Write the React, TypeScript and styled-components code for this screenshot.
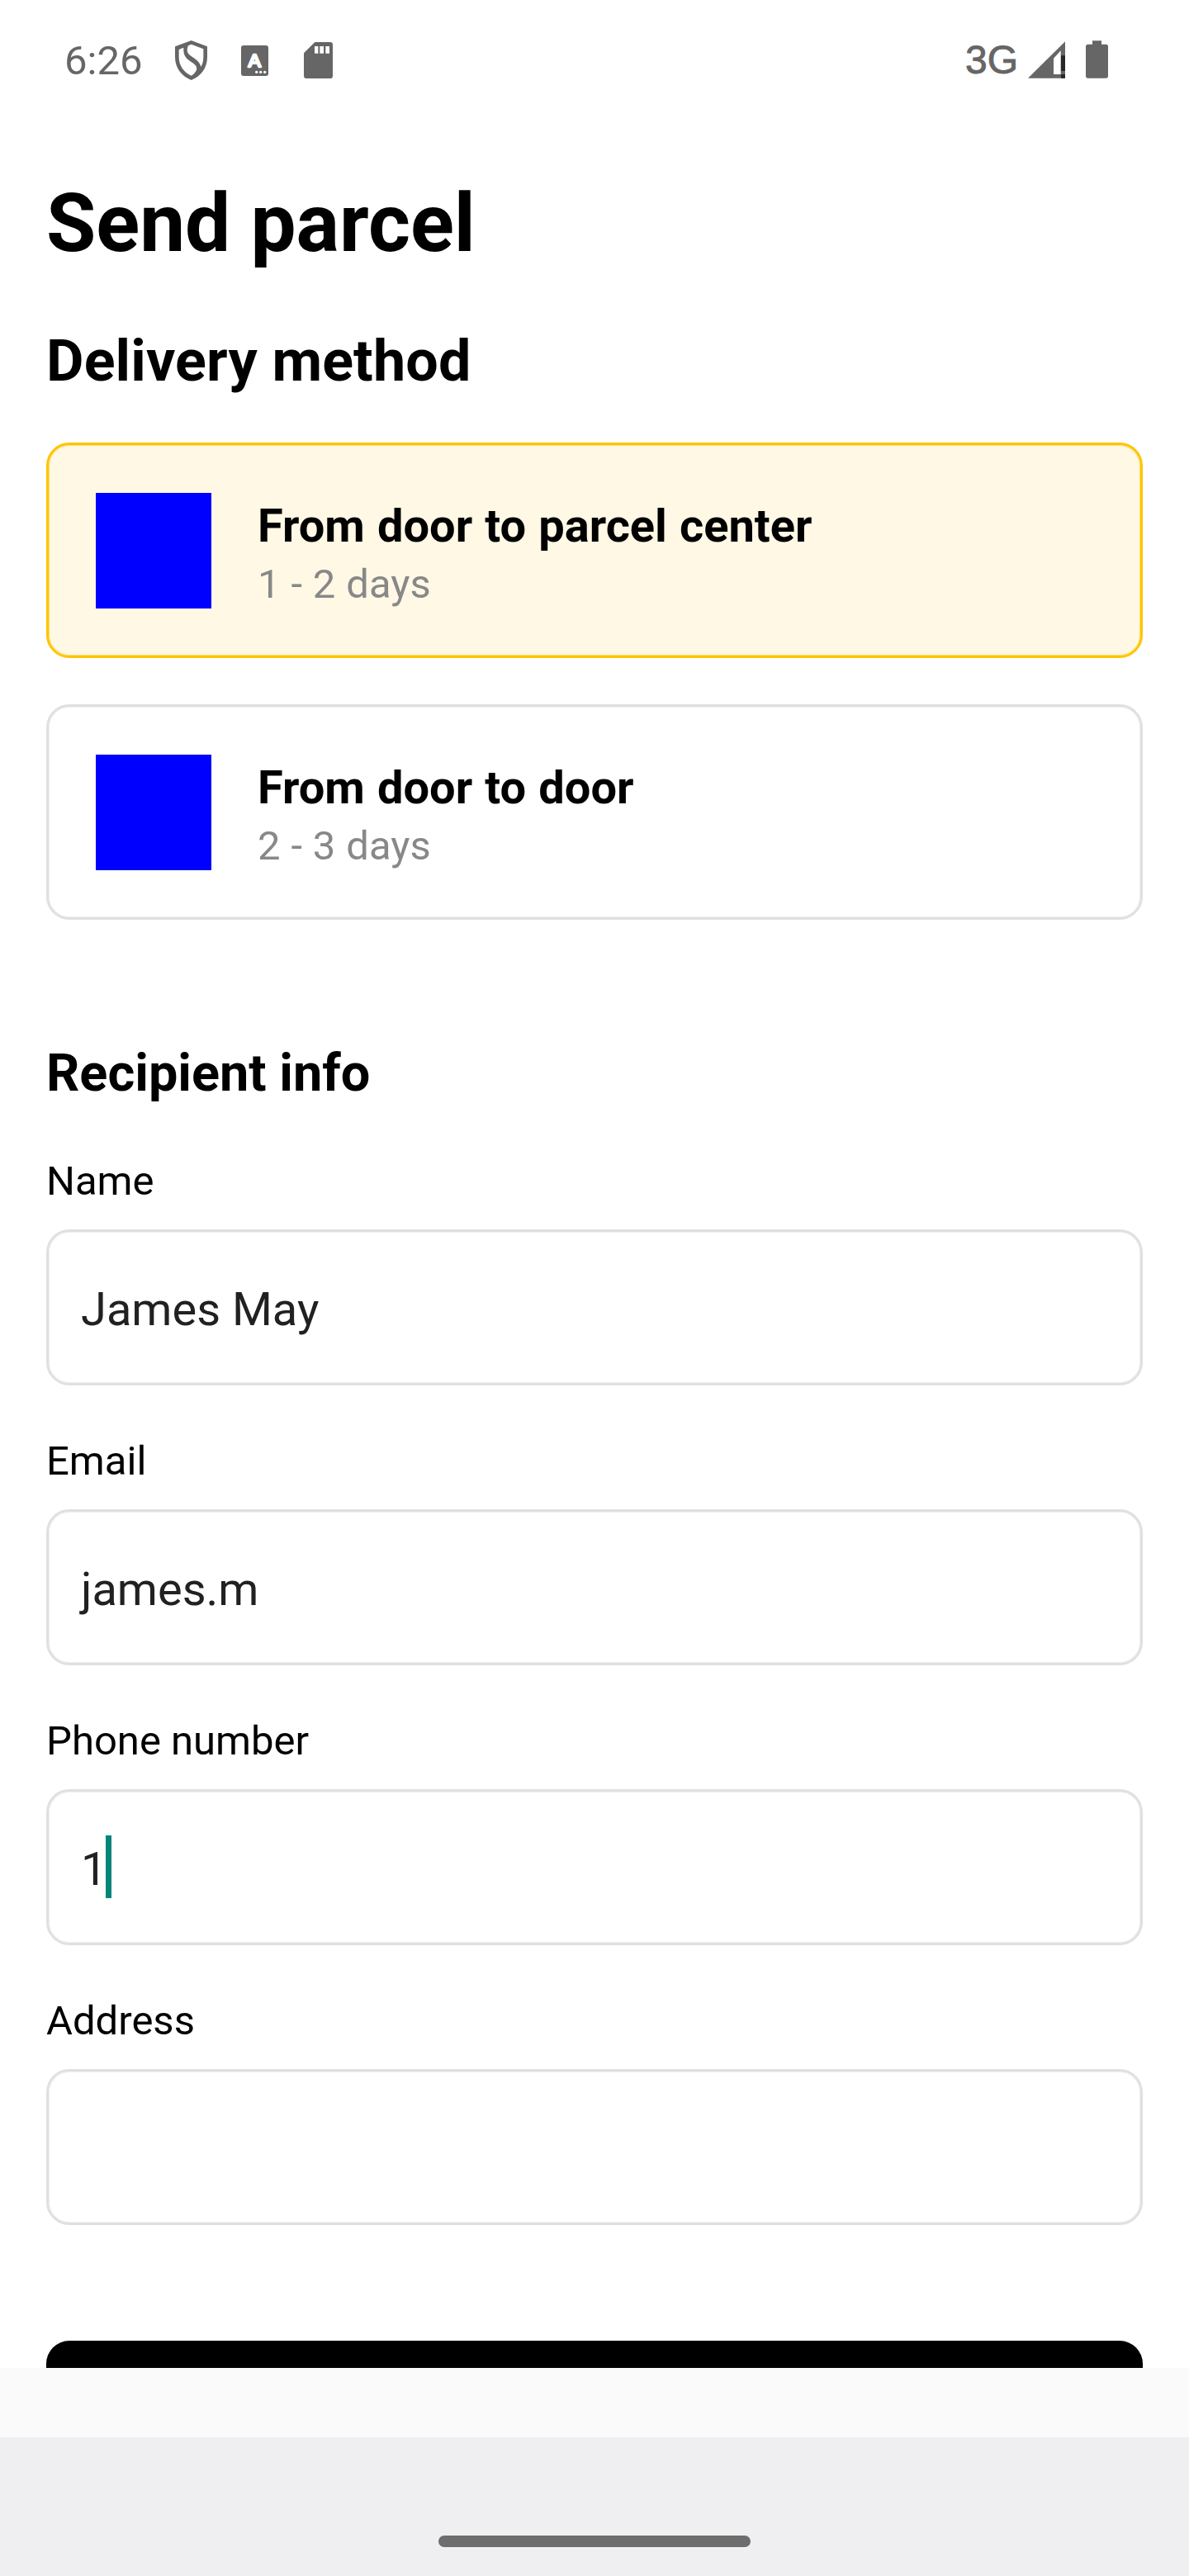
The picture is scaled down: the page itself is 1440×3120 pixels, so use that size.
import React from 'react';
import styled, { createGlobalStyle } from 'styled-components';

const GlobalStyle = createGlobalStyle`
  *, *::before, *::after { box-sizing: border-box; }
  body { margin: 0; background: #fff; }
`;

const Screen = styled.div`
  display: flex;
  flex-direction: column;
  width: 1440px;
  height: 3120px;
  overflow: hidden;
  background: #fff;
  color: #000;
  font-family: Roboto, 'Liberation Sans', sans-serif;
`;

const StatusBar = styled.header`
  display: flex;
  justify-content: space-between;
  flex: none;
  height: 145px;
  padding: 45px 98px 0 78px;
  color: #666;
`;

const StatusGroup = styled.div`
  display: flex;
  align-items: flex-start;
`;

const Clock = styled.span`
  width: 95px;
  font-size: 49px;
  line-height: 57px;
`;

const Network = styled.span`
  font-family: 'Liberation Sans', Arial, sans-serif;
  font-size: 48px;
  line-height: 56px;
  -webkit-text-stroke: 0.9px currentColor;
`;

const StatusIcon = styled.svg<{ $left: number; $top: number }>`
  flex: none;
  display: block;
  margin-left: ${(p) => p.$left}px;
  margin-top: ${(p) => p.$top}px;
`;

const IconLetter = styled.text`
  font-family: 'Liberation Sans', Arial, sans-serif;
  font-weight: 400;
  font-size: 68px;
`;

const Content = styled.main`
  flex: none;
  height: 2723px;
  padding: 68px 56px 0;
  overflow: hidden;
`;

const Title = styled.h1`
  margin: 0 0 68px;
  font-size: 98px;
  line-height: 115px;
  font-weight: 700;
  letter-spacing: -0.05px;
`;

const SectionTitle = styled.h2<{ $size: number; $line: number; $gap: number; $tracking?: number }>`
  margin: 0 0 ${(p) => p.$gap}px;
  font-size: ${(p) => p.$size}px;
  line-height: ${(p) => p.$line}px;
  font-weight: 700;
  letter-spacing: ${(p) => p.$tracking ?? 0}px;
`;

const MethodList = styled.div`
  display: flex;
  flex-direction: column;
  gap: 56px;
  margin-bottom: 149px;
`;

const MethodCard = styled.div<{ $selected?: boolean }>`
  display: flex;
  gap: 56px;
  height: 261px;
  padding: 58px 57px;
  border: 3px solid ${(p) => (p.$selected ? '#ffc400' : '#e0e0e0')};
  border-radius: 28px;
  background: ${(p) => (p.$selected ? '#fff8e5' : '#fff')};
  box-shadow: inset 0 0 0 1px ${(p) => (p.$selected ? '#ffde73' : '#efefef')};
`;

const Thumb = styled.div`
  width: 140px;
  height: 140px;
  background: #00f;
`;

const MethodText = styled.div`
  display: flex;
  flex-direction: column;
  gap: 9px;
  padding-top: 7px;
`;

const MethodName = styled.div`
  font-size: 56px;
  line-height: 66px;
  font-weight: 700;
  word-spacing: 1.2px;
`;

const MethodTime = styled.div`
  font-size: 49px;
  line-height: 57px;
  letter-spacing: 0.1px;
  word-spacing: 0.5px;
  color: #888;
`;

const Form = styled.form`
  display: flex;
  flex-direction: column;
  gap: 63px;
`;

const Field = styled.div`
  display: flex;
  flex-direction: column;
  gap: 30px;
`;

const Label = styled.label`
  font-size: 49px;
  line-height: 57px;
`;

const InputBox = styled.div`
  display: flex;
  align-items: flex-start;
  height: 189px;
  padding: 61px 39px 0;
  border: 3px solid #e0e0e0;
  border-radius: 28px;
  box-shadow: inset 0 0 0 1px #efefef;
  font-size: 56px;
  line-height: 66px;
  color: #212121;
`;

const Caret = styled.span`
  width: 7px;
  height: 76px;
  margin: -8px 0 0 -1px;
  background: #018577;
`;

const SubmitButton = styled.button`
  display: block;
  width: 100%;
  height: 189px;
  margin-top: 140px;
  border: 0;
  border-radius: 28px;
  background: #000;
`;

const BottomStrip = styled.div`
  flex: none;
  height: 84px;
  background: #fafafa;
`;

const NavBar = styled.footer`
  flex: 1;
  display: flex;
  justify-content: center;
  padding-top: 119px;
  background: #efeff1;
`;

const HomeHandle = styled.div`
  width: 378px;
  height: 14px;
  border-radius: 7px;
  background: #6d6d6d;
`;

const ShieldIcon = () => (
  <StatusIcon $left={39} $top={4} width="39" height="48" viewBox="486 57 117 144" fill="#666">
    <path
      fillRule="evenodd"
      d="M545 57 L603 79 V117 C603 158 579 188 545 201 C511 188 486 158 486 117 V79 Z
         M500 90 L517 83 C515 112 527 123 545 135 C560 145 567 152 564 165 C559 174 553 181 545 185 C518 174 500 148 500 118 Z
         M545 71 L589 88 V118 C589 131 586 143 580 153 C577 137 562 126 550 118 C532 107 525 96 534 76 Z"
    />
  </StatusIcon>
);

const LetterIcon = () => (
  <StatusIcon $left={41} $top={10} width="33" height="37" viewBox="726 75 99 111">
    <rect x="726" y="75" width="99" height="111" rx="9" fill="#666" />
    <IconLetter x="775" y="153" textAnchor="middle" fill="#fff" stroke="#fff" strokeWidth="8" strokeLinejoin="round">
      A
    </IconLetter>
    <circle cx="782" cy="172" r="5" fill="#fff" />
    <circle cx="797" cy="172" r="5" fill="#fff" />
    <circle cx="812" cy="172" r="5" fill="#fff" />
  </StatusIcon>
);

const SdCardIcon = () => (
  <StatusIcon $left={43} $top={6} width="35" height="44" viewBox="954 63 105 132">
    <path
      fill="#666"
      d="M994 63 H1049 Q1059 63 1059 73 V185 Q1059 195 1049 195 H964 Q954 195 954 185 V103 Z"
    />
    <path fill="#fff" d="M993 78 h13 v26 h-13 Z M1012 78 h14 v26 h-14 Z M1033 78 h14 v26 h-14 Z" />
  </StatusIcon>
);

const SignalIcon = () => (
  <StatusIcon $left={12} $top={5} width="45" height="45" viewBox="315 60 135 135">
    <path fill="#666" d="M315 194 L450 61 V194 Z" />
    <path fill="#fff" d="M408 122 L434 94 V180 H408 Z" />
    <path fill="#282828" d="M435 112 H450 V168 H435 Z M435 180 H450 V194 H435 Z" />
  </StatusIcon>
);

const BatteryIcon = () => (
  <StatusIcon $left={25} $top={4} width="27" height="46" viewBox="525 57 81 138" fill="#666">
    <path d="M549 58 H582 V71 H598 Q606 71 606 79 V186 Q606 194 598 194 H533 Q525 194 525 186 V79 Q525 71 533 71 H549 Z" />
  </StatusIcon>
);

const methods = [
  { name: 'From door to parcel center', time: '1 - 2 days', selected: true },
  { name: 'From door to door', time: '2 - 3 days', selected: false },
];

const fields = [
  { label: 'Name', value: 'James May', focused: false },
  { label: 'Email', value: 'james.m', focused: false },
  { label: 'Phone number', value: '1', focused: true },
  { label: 'Address', value: '', focused: false },
];

export default function App() {
  return (
    <>
      <GlobalStyle />
      <Screen>
        <StatusBar>
          <StatusGroup>
            <Clock>6:26</Clock>
            <ShieldIcon />
            <LetterIcon />
            <SdCardIcon />
          </StatusGroup>
          <StatusGroup>
            <Network>3G</Network>
            <SignalIcon />
            <BatteryIcon />
          </StatusGroup>
        </StatusBar>
        <Content>
          <Title>Send parcel</Title>
          <SectionTitle $size={70} $line={82} $gap={58} $tracking={0.15}>
            Delivery method
          </SectionTitle>
          <MethodList>
            {methods.map((m) => (
              <MethodCard key={m.name} $selected={m.selected}>
                <Thumb />
                <MethodText>
                  <MethodName>{m.name}</MethodName>
                  <MethodTime>{m.time}</MethodTime>
                </MethodText>
              </MethodCard>
            ))}
          </MethodList>
          <SectionTitle $size={63} $line={73} $gap={66}>
            Recipient info
          </SectionTitle>
          <Form>
            {fields.map((f) => (
              <Field key={f.label}>
                <Label>{f.label}</Label>
                <InputBox>
                  <span>{f.value}</span>
                  {f.focused && <Caret />}
                </InputBox>
              </Field>
            ))}
          </Form>
          <SubmitButton type="button" />
        </Content>
        <BottomStrip />
        <NavBar>
          <HomeHandle />
        </NavBar>
      </Screen>
    </>
  );
}
